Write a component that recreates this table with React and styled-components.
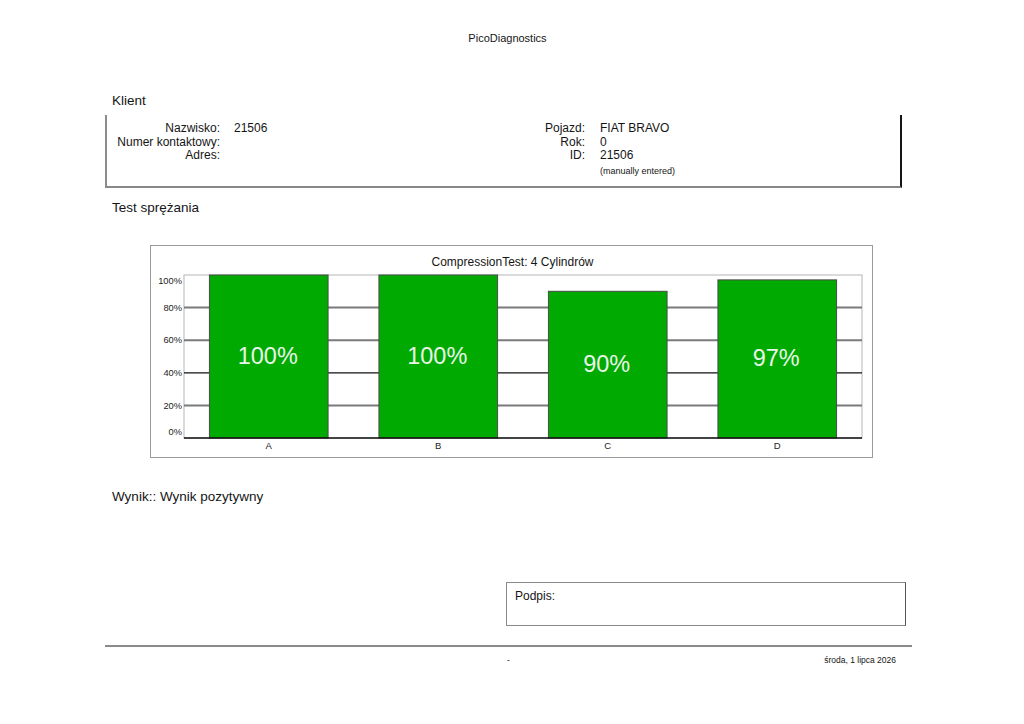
import styled, { createGlobalStyle } from "styled-components"

const GlobalStyle = createGlobalStyle`
  html, body {
    margin: 0;
    padding: 0;
    background: #fff;
  }
  body {
    font-family: "Liberation Sans", Arial, sans-serif;
    color: #151515;
  }
`

const CYLINDERS = [
  {name: "A", value: 100},
  {name: "B", value: 100},
  {name: "C", value: 90},
  {name: "D", value: 97},
]

const TICKS = [100, 80, 60, 40, 20, 0]

function CompressionChart({data}) {
  // plot area inside the svg
  const px = 33
  const py = 6
  const pw = 678
  const ph = 163
  const slot = pw / data.length
  const barW = slot * 0.7
  const yOf = (v) => py + ph - (ph * v) / 100

  return (
    <svg width="721" height="188" viewBox="0 0 721 188">
      <rect x={px} y={py} width={pw} height={ph} fill="#fff" stroke="#b5b5b5" strokeWidth="1" />
      {[80, 60, 20].map((t) => (
        <line key={t} x1={px} x2={px + pw} y1={yOf(t)} y2={yOf(t)} stroke="#7a7a7a" strokeWidth="2" />
      ))}
      <line x1={px} x2={px + pw} y1={yOf(40)} y2={yOf(40)} stroke="#111" strokeWidth="1.2" />
      {TICKS.map((t) => {
        let cy = yOf(t)
        if (t === 100) cy += 6
        if (t === 0) cy -= 6
        return (
          <text key={t} x={px - 2} y={cy + 3.2} textAnchor="end" fontSize="9.3" fill="#222">
            {t}%
          </text>
        )
      })}
      {data.map((d, i) => {
        const cx = px + slot * i + slot / 2
        const top = yOf(d.value)
        const mid = (top + py + ph) / 2
        return (
          <g key={d.name}>
            <rect x={cx - barW / 2} y={top} width={barW} height={py + ph - top} fill="#00aa00" stroke="#4a4a4a" strokeWidth="1" />
            <text x={cx - 1} y={mid + 7.5} textAnchor="middle" fontSize="23.5" fill="#e9f6e9">
              {d.value}%
            </text>
            <text x={cx} y={py + ph + 10.5} textAnchor="middle" fontSize="9.5" fill="#222">
              {d.name}
            </text>
          </g>
        )
      })}
      <line x1={px} x2={px + pw} y1={py + ph} y2={py + ph} stroke="#111" strokeWidth="1.5" />
    </svg>
  )
}

export default function App() {
  return (
    <>
      <GlobalStyle />
      <Page>
        <AppTitle>PicoDiagnostics</AppTitle>

        <SectionHeading $top={48}>Klient</SectionHeading>
        <ClientBox>
          <InfoGroup $labelWidth={113} $width={320}>
            <Label>Nazwisko:</Label>
            <Value>21506</Value>
            <Label>Numer kontaktowy:</Label>
            <Value />
            <Label>Adres:</Label>
            <Value />
          </InfoGroup>
          <InfoGroup $labelWidth={158} $gap={15}>
            <Label>Pojazd:</Label>
            <Value>FIAT BRAVO</Value>
            <Label>Rok:</Label>
            <Value>0</Value>
            <Label>ID:</Label>
            <Value>21506</Value>
            <Label />
            <Note>(manually entered)</Note>
          </InfoGroup>
        </ClientBox>

        <SectionHeading $top={12}>Test sprężania</SectionHeading>
        <ChartFrame>
          <ChartTitle>CompressionTest: 4 Cylindrów</ChartTitle>
          <CompressionChart data={CYLINDERS} />
        </ChartFrame>

        <SectionHeading $top={31}>Wynik:: Wynik pozytywny</SectionHeading>

        <SignatureBox>Podpis:</SignatureBox>

        <Footer>
          <span />
          <FooterText $align="center">-</FooterText>
          <FooterText $align="right" $pad={16}>środa, 1 lipca 2026</FooterText>
        </Footer>
      </Page>
    </>
  )
}

const Page = styled.div`
  width: 807px;
  height: 724px;
  box-sizing: border-box;
  margin-left: 105px;
  padding-top: 31px;
  overflow: hidden;
`

const AppTitle = styled.div`
  font-size: 11px;
  line-height: 14px;
  text-align: center;
  padding-right: 2px;
`

const SectionHeading = styled.div`
  margin-top: ${(_) => _.$top}px;
  padding-left: 7px;
  font-size: 13.5px;
  line-height: 16px;
`

const ClientBox = styled.div`
  margin-top: 6px;
  width: 797px;
  box-sizing: border-box;
  display: flex;
  padding: 7px 0 10px;
  border-left: 2px solid #8c8c8c;
  border-right: 2px solid #151515;
  border-bottom: 2px solid #878787;
`

const InfoGroup = styled.div`
  display: grid;
  grid-template-columns: ${(_) => _.$labelWidth}px 1fr;
  grid-auto-rows: 13.5px;
  column-gap: ${(_) => _.$gap || 14}px;
  align-content: start;
  width: ${(_) => (_.$width ? `${_.$width}px` : "auto")};
  flex: ${(_) => (_.$width ? "none" : "1")};
`

const Label = styled.div`
  text-align: right;
  font-size: 12px;
  line-height: 13.5px;
`

const Value = styled.div`
  font-size: 12px;
  line-height: 13.5px;
`

const Note = styled.div`
  font-size: 9px;
  line-height: 14px;
  margin-top: 1px;
`

const ChartFrame = styled.div`
  margin-top: 29px;
  margin-left: 45px;
  width: 723px;
  height: 213px;
  box-sizing: border-box;
  border: 1px solid #9a9a9a;
  display: flex;
  flex-direction: column;
  svg {
    display: block;
    font-family: "Liberation Sans", Arial, sans-serif;
  }
`

const ChartTitle = styled.div`
  padding-top: 9px;
  font-size: 12px;
  line-height: 14px;
  text-align: center;
  padding-left: 2px;
`

const SignatureBox = styled.div`
  margin-top: 77px;
  margin-left: 401px;
  width: 400px;
  height: 44px;
  box-sizing: border-box;
  padding: 6px 8px;
  border: 1px solid #8a8a8a;
  border-right-color: #555;
  font-size: 12px;
  line-height: 14px;
`

const Footer = styled.div`
  margin-top: 19px;
  border-top: 2px solid #8a8a8a;
  padding-top: 8px;
  display: grid;
  grid-template-columns: 1fr auto 1fr;
`

const FooterText = styled.span`
  font-size: 8.5px;
  line-height: 10px;
  text-align: ${(_) => _.$align};
  padding-right: ${(_) => _.$pad || 0}px;
`
